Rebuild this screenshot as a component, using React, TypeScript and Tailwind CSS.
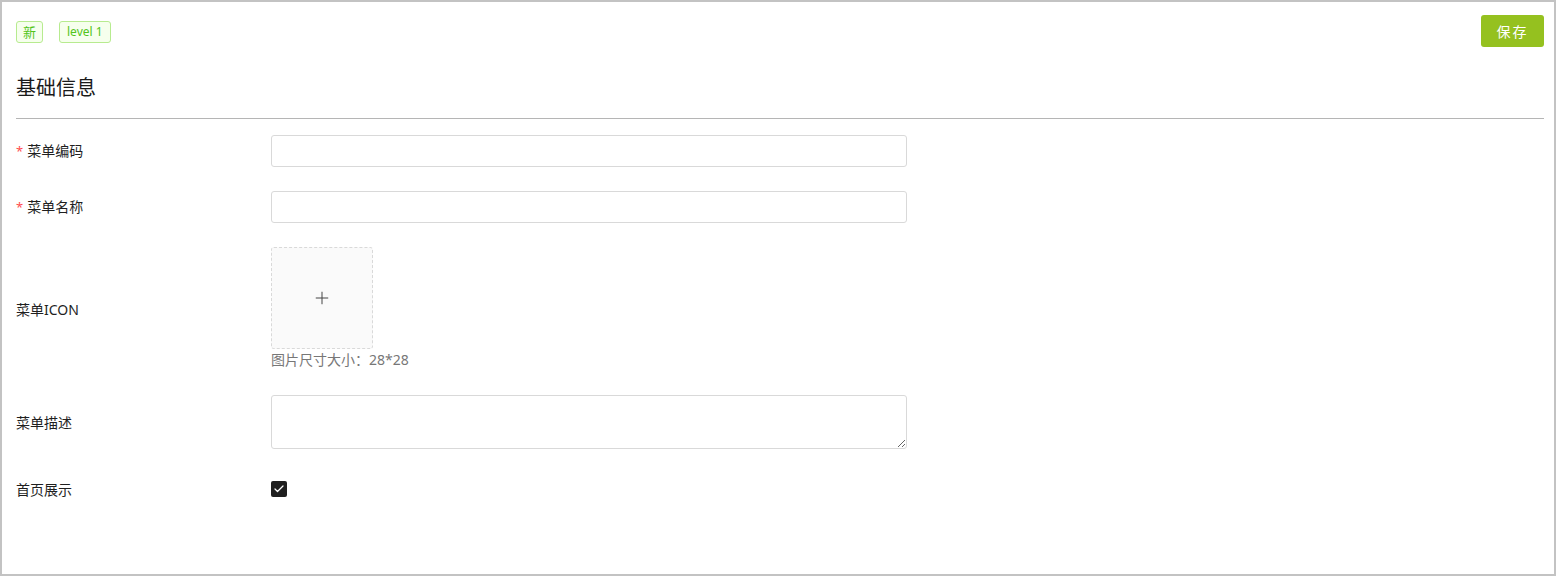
import { Check, Plus } from "lucide-react";

const FONT = { fontFamily: '"Noto Sans", "Noto Sans CJK SC", sans-serif' };

function Label({ text, required }: { text: string; required?: boolean }) {
  return (
    <div className="w-[255px] shrink-0 text-[14px] text-[#1f1f1f]">
      {required && <span className="mr-1 text-[13px] text-[#ff4d4f]">*</span>}
      {text}
    </div>
  );
}

export default function App() {
  return (
    <div
      style={FONT}
      className="h-[576px] w-full border-2 border-[#c3c3c3] bg-white pl-[14px] pr-[10px] pt-[13px]"
    >
      <div className="flex h-8 items-center justify-between">
        <div className="flex items-center gap-4 pt-px">
          <span className="rounded-[3px] border border-[#b7eb8f] bg-[#f6ffed] px-[6px] text-[13px] leading-[20px] text-[#52c41a]">
            新
          </span>
          <span className="rounded-[3px] border border-[#b7eb8f] bg-[#f6ffed] px-[7px] text-[12px] leading-[20px] text-[#52c41a]">
            level 1
          </span>
        </div>
        <button className="h-8 w-[63px] rounded-[3px] bg-[#95c11f] text-[14px] tracking-[2px] text-white">
          保存
        </button>
      </div>

      <h2 className="mt-[27px] text-[20px] leading-7 text-[#1a1a1a]">基础信息</h2>
      <div className="mt-[16px] h-px bg-[#b5b5b5]" />

      <div className="mt-4 flex flex-col gap-6">
        <div className="flex items-center">
          <Label text="菜单编码" required />
          <input className="h-8 w-[636px] rounded-[3px] border border-[#d9d9d9] outline-none" />
        </div>
        <div className="flex items-center">
          <Label text="菜单名称" required />
          <input className="h-8 w-[636px] rounded-[3px] border border-[#d9d9d9] outline-none" />
        </div>
        <div className="flex items-center">
          <Label text="菜单ICON" />
          <div>
            <div className="flex h-[102px] w-[102px] items-center justify-center rounded-[3px] border border-dashed border-[#d9d9d9] bg-[#fafafa]">
              <Plus size={20} strokeWidth={1.2} className="text-[#444]" />
            </div>
            <div className="text-[14px] leading-[22px] text-[#777]">图片尺寸大小：28*28</div>
          </div>
        </div>
        <div className="flex items-center">
          <Label text="菜单描述" />
          <textarea className="h-[54px] w-[636px] rounded-[3px] border border-[#d9d9d9] outline-none" />
        </div>
        <div className="flex h-8 items-center">
          <Label text="首页展示" />
          <span className="flex h-4 w-4 items-center justify-center rounded-[2px] bg-[#1f1f1f]">
            <Check size={12} strokeWidth={2.5} className="text-white" />
          </span>
        </div>
      </div>
    </div>
  );
}
